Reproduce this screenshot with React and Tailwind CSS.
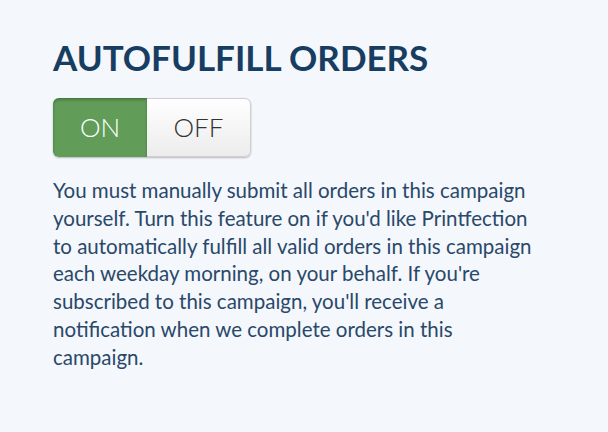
export default function App() {
  return (
    <div className="min-h-[432px] w-[608px] bg-[#f4f7fb] px-[53px] pt-[37px] font-['Lato','Liberation_Sans',sans-serif]">
      <h1 className="text-[35px] font-bold leading-[40px] text-[#173d62]">AUTOFULFILL ORDERS</h1>
      <div className="mt-[21px] flex h-[59px] w-[198px] rounded-[6px] shadow-[0_1px_2px_rgba(0,0,0,0.25)]">
        <button className="flex w-[94px] items-center justify-center rounded-l-[6px] bg-[#619d59] text-[26px] font-light text-white shadow-[inset_0_2px_3px_rgba(0,0,0,0.25)]">
          ON
        </button>
        <button className="flex flex-1 items-center justify-center rounded-r-[6px] border border-l-0 border-[#cfcfcf] bg-gradient-to-b from-white to-[#ececec] text-[26px] font-light text-[#333]">
          OFF
        </button>
      </div>
      <p className="mt-[20px] w-[484px] text-[20.5px] leading-[27.8px] text-[#29486a]">
        You must manually submit all orders in this campaign yourself. Turn this feature on if you'd like Printfection to automatically fulfill all valid orders in this campaign each weekday morning, on your behalf. If you're subscribed to this campaign, you'll receive a notification when we complete orders in this campaign.
      </p>
    </div>
  )
}
